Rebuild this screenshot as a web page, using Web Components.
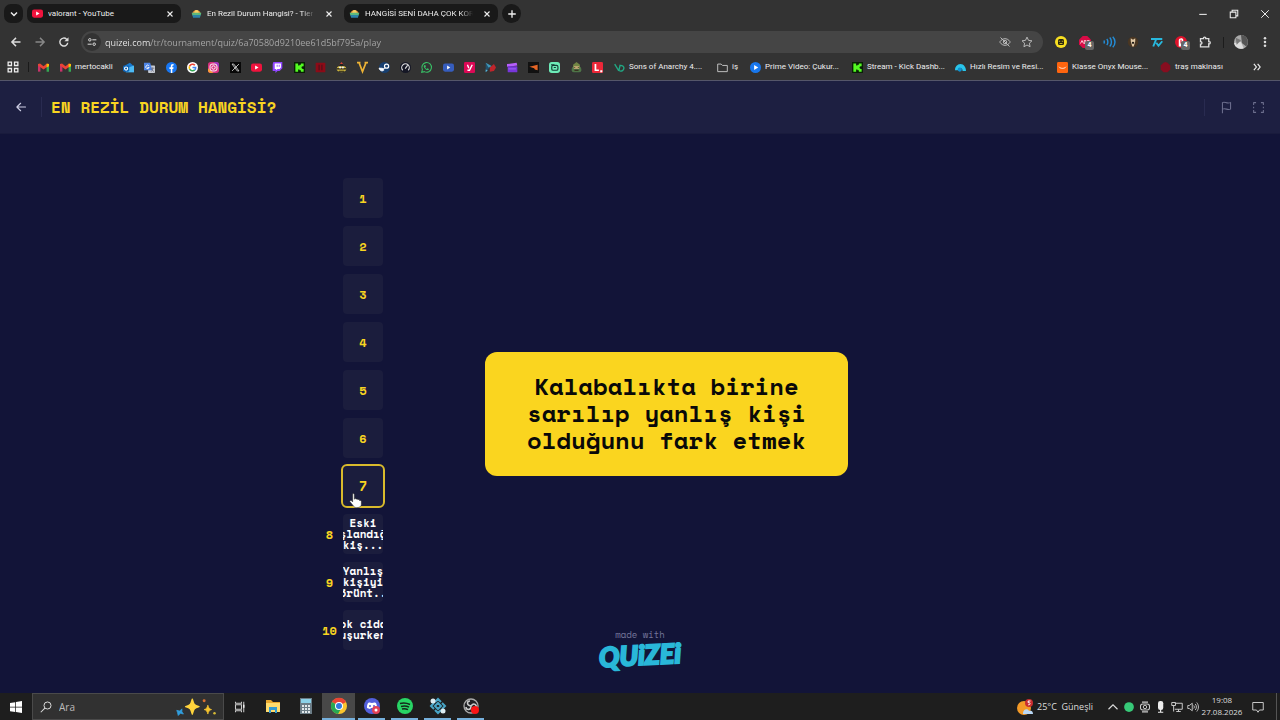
<!DOCTYPE html>
<html lang="tr">
<head>
<meta charset="utf-8">
<meta name="viewport" content="width=device-width, initial-scale=1">
<title>En Rezil Durum Hangisi? - Tier List</title>
<style>
  html, body { margin: 0; height: 100%; }
  body { background: #121438; font-family: "Segoe UI", "Open Sans", "Noto Sans", sans-serif; }
</style>
</head>
<body>
<desktop-screen></desktop-screen>
<script>
const ICONS = {
  down: '<path d="M4 6l4 4 4-4" fill="none" stroke="currentColor" stroke-width="2"/>',
  up: '<path d="M2 11l6-6 6 6" fill="none" stroke="currentColor" stroke-width="1.5"/>',
  close: '<path d="M4 4l8 8M12 4l-8 8" stroke="currentColor" stroke-width="1.8"/>',
  winclose: '<path d="M3 3l10 10M13 3L3 13" stroke="currentColor" stroke-width="1.3"/>',
  minimize: '<path d="M3 8.5h10" stroke="currentColor" stroke-width="1.4"/>',
  restore: '<path d="M3 5.5h7.5V13H3zM5.5 5.500V3H13v7.500h-2.500" fill="none" stroke="currentColor" stroke-width="1.4"/>',
  plus: '<path d="M8 3v10M3 8h10" stroke="currentColor" stroke-width="1.8"/>',
  back: '<path d="M14 8H3M8 2.500L2.500 8 8 13.500" fill="none" stroke="currentColor" stroke-width="1.9"/>',
  thinback: '<path d="M14 8H2.500M7.500 3l-5 5 5 5" fill="none" stroke="currentColor" stroke-width="1.5" stroke-linecap="round" stroke-linejoin="round"/>',
  forward: '<path d="M2 8h11M8 2.500L13.500 8 8 13.500" fill="none" stroke="currentColor" stroke-width="1.9"/>',
  reload: '<path d="M13 9a5.300 5.300 0 1 1-1.600-4.800L13 5.800" fill="none" stroke="currentColor" stroke-width="1.9"/><path d="M14 1.500V7H8.500z" fill="currentColor"/>',
  tune: '<g fill="none" stroke="currentColor" stroke-width="1.6"><circle cx="4.500" cy="4.500" r="2"/><path d="M8.500 4.500H15M1 11.500h6.500"/><circle cx="11.500" cy="11.500" r="2"/></g>',
  eyeoff: '<g fill="none" stroke="currentColor" stroke-width="1.3"><path d="M1 8s2.500-4.500 7-4.500S15 8 15 8s-2.500 4.500-7 4.500S1 8 1 8z"/><circle cx="8" cy="8" r="2.300"/><path d="M2 2l12 12"/></g>',
  star: '<path d="M8 1.500l2 4.300 4.600.6-3.400 3.200.9 4.700L8 12l-4.100 2.300.9-4.700L1.400 6.400 6 5.800z" fill="none" stroke="currentColor" stroke-width="1.300"/>',
  dots: '<g fill="currentColor"><circle cx="8" cy="3" r="1.700"/><circle cx="8" cy="8" r="1.700"/><circle cx="8" cy="13" r="1.700"/></g>',
  puzzle: '<path d="M2 3.500h4c-.5-2.600 3.500-2.600 3 0h4v4c2.600-.5 2.600 3.500 0 3v4H2v-3.500c2.500.3 2.500-3.800 0-3.500z" fill="none" stroke="currentColor" stroke-width="1.800"/>',
  avatar: '<circle cx="8" cy="8" r="8" fill="#aaa"/><path d="M8 0a8 8 0 0 1 6 13l-5-4z" fill="#555"/><path d="M0 9l8-1 3 7a8 8 0 0 1-11-6z" fill="#ddd"/><path d="M2 3l6 3-5 5z" fill="#777"/>',
  quizicon: '<path d="M2 8C3 1 13 1 14 8z" fill="#e8963a"/><circle cx="8" cy="6" r="3" fill="#f6cf65"/><path d="M1 7h14l-1 4H2z" fill="#5db97c"/><path d="M2 10h12l-1 4H3z" fill="#2b82a8"/>',
  youtube: '<rect x="0" y="2" width="16" height="12" rx="3" fill="#f0133d"/><path d="M6 5l5 3-5 3z" fill="#fff"/>',
  apps: '<g fill="none" stroke="currentColor" stroke-width="1.700"><path d="M1.500 1.500h4.500v4.500H1.500zM10 1.500h4.500v4.500H10zM1.500 10h4.500v4.500H1.500zM10 10h4.500v4.500H10z"/></g>',
  gmail: '<path d="M0 3h3.500v11H0z" fill="#c8336a"/><path d="M12.500 5L16 3v11h-3.500z" fill="#34a853"/><path d="M0 3l3-1 5 4 5-4 3 1v2l-8 6-8-6z" fill="#ea4335"/><path d="M12.500 2.500L16 3v3l-3.500 2z" fill="#fbbc04"/>',
  outlook: '<path d="M3 5l7-4 6 5v9H4z" fill="#1779cf"/><path d="M5 9l11-4v10H4z" fill="#4dbaf3"/><rect x="0" y="5" width="9" height="9" rx="2" fill="#0d64b7"/><circle cx="4.500" cy="9.500" r="2.300" fill="none" stroke="#fff" stroke-width="1.500"/>',
  translate: '<rect x="6" y="5" width="10" height="11" rx="1" fill="#c7ccd3"/><path d="M0 1h9l3 11H0z" fill="#4d84e5"/><path d="M7 5.500A2.500 2.500 0 1 0 7.500 8H5" fill="none" stroke="#fff" stroke-width="1.300"/><path d="M10 9h5M12.500 8v2c0 2-1 3-2 4M11 10c1 2 2 3 3.500 4" fill="none" stroke="#667" stroke-width="1"/>',
  facebook: '<circle cx="8" cy="8" r="8" fill="#1877f2"/><path d="M7 16v-6H5V7.500h2V6c0-2 1-3.200 4-3v2.200c-1.300 0-1.800.1-1.800 1.200v1.100H11l-.4 2.500H9.200v6z" fill="#fff"/>',
  google: '<circle cx="8" cy="8" r="8" fill="#fff"/><g fill="none" stroke-width="2.300"><path d="M11.500 4.800A4.700 4.700 0 0 0 3.800 6" stroke="#ea4335"/><path d="M3.800 6a4.700 4.700 0 0 0 .1 4.300" stroke="#fbbc05"/><path d="M3.900 10.300a4.700 4.700 0 0 0 7.300 1.200" stroke="#34a853"/><path d="M11.200 11.500C12.300 10.500 12.700 9.500 12.600 8H8" stroke="#4285f4"/></g>',
  instagram: '<rect width="16" height="16" rx="4" fill="#d9307f"/><path d="M0 9l8 7H4a4 4 0 0 1-4-4z" fill="#fb9d37"/><path d="M8 0h4a4 4 0 0 1 4 4v4z" fill="#9c36bd"/><rect x="3" y="3" width="10" height="10" rx="3" fill="none" stroke="#fff" stroke-width="1.400"/><circle cx="8" cy="8" r="2.500" fill="none" stroke="#fff" stroke-width="1.400"/>',
  x: '<rect width="16" height="16" fill="#080808"/><path d="M3 3h2.500L13 13h-2.500zM13 3L3 13" fill="none" stroke="#ddd" stroke-width="1.200"/>',
  twitch: '<path d="M2 0h13v9l-4 4H8l-3 3v-3H1V3z" fill="#9146ff"/><path d="M4 2h9v6l-2 2H8l-2 2v-2H4z" fill="#fff"/><path d="M7.500 4v3M10.500 4v3" stroke="#9146ff" stroke-width="1.300"/>',
  kick: '<rect width="16" height="16" fill="#092106"/><path d="M2 2h4v3h2V4h2V2h4v4h-2v1h-1v2h1v1h2v4h-4v-2H8v-1H6v3H2z" fill="#54fb22"/>',
  redbook: '<rect x="1" y="1" width="14" height="14" rx="1" fill="#8c0b17"/><path d="M6 4v8M10 4v8" stroke="#57101a" stroke-width="2"/>',
  bee: '<ellipse cx="8" cy="10" rx="7" ry="5" fill="#d6bd42"/><path d="M5 4l3-4 3 4z" fill="#d74036"/><path d="M4 6l2-3h4l2 3z" fill="#222"/><path d="M1 10h14M4 13.500h8" stroke="#161616" stroke-width="1.600"/><circle cx="6" cy="8" r="1.600" fill="#eee"/><circle cx="10" cy="8" r="1.600" fill="#eee"/>',
  v: '<path d="M0 1h5M11 1h5M3 1l5 13 5-13" fill="none" stroke="#edb335" stroke-width="2.500"/>',
  steam: '<circle cx="8" cy="8" r="8" fill="#173f70"/><circle cx="11" cy="6" r="3" fill="none" stroke="#fff" stroke-width="1.800"/><path d="M0 9l6 2 3-2M0 9c1 4 5 5 7 3L5 9z" fill="#eef6ff" stroke="#fff"/>',
  gauge: '<circle cx="8" cy="8" r="8" fill="#151725"/><path d="M4 12a5.500 5.500 0 1 1 8 0M7.500 9.500L11 5" fill="none" stroke="#ddd" stroke-width="1.700"/>',
  whatsapp: '<path d="M1 15l1-4A7 7 0 1 1 5 14z" fill="none" stroke="#38bd65" stroke-width="1.600"/><path d="M5 4.500l2 .5v2L6 8l2 2.300L9.500 9l2 1c0 3-5 2-7-2-.8-1.600-.5-2.700.5-3.500z" fill="#38bd65"/>',
  bluevideo: '<rect y="2" width="16" height="12" rx="3" fill="#365dbd"/><path d="M6 5l4.500 3L6 11z" fill="#fff"/>',
  y: '<rect width="16" height="16" rx="2" fill="#dc0956"/><path d="M5 4l2 5M12 4L8 12H5" fill="none" stroke="#fff" stroke-width="2"/>',
  prism: '<path d="M1 1l9 5-4 3-5 6z" fill="#24506a"/><path d="M1 1l9 5-5 2z" fill="#4298b9"/><path d="M7 8l6-5 3 5-3 5-6 1z" fill="#bf252b"/><path d="M1 11l3 1-3 3z" fill="#56b5d8"/>',
  clap: '<path d="M0 3l14-2 1 4L0 7z" fill="#b75efb"/><rect x="1" y="6" width="14" height="9" rx="1" fill="#7836db"/><path d="M2 10h11" stroke="#b579ff"/>',
  arrow: '<rect width="16" height="16" fill="#111"/><path d="M2 7l12-3v8l-4-1-1-2z" fill="#e56526"/>',
  robot: '<rect width="16" height="16" rx="4" fill="#6decb8"/><rect x="4" y="5" width="9" height="7" rx="2" fill="none" stroke="#153e37" stroke-width="1.700"/><path d="M3 4h5M7 8h3" stroke="#153e37" stroke-width="1.500"/>',
  frog: '<path d="M3 4l5-4 5 4v10H3z" fill="#718544"/><rect x="1" y="7" width="14" height="8" rx="3" fill="#4e7447"/><path d="M4 6h8v4H4z" fill="#c1aa74"/><path d="M5 8h1M10 8h1M5 12h6" stroke="#301e14" stroke-width="1.500"/>',
  l: '<rect width="16" height="16" rx="2" fill="#ec2738"/><path d="M5 3v9h5" fill="none" stroke="#fff" stroke-width="2.500"/><path d="M12 12h3v3h-3z" fill="#fff"/>',
  vb: '<path d="M1 3l6 10M9 4l-2 9M8 5c10-1 7 10 0 8" fill="none" stroke="#21a783" stroke-width="2"/>',
  folder: '<path d="M1 3h5l2 2h7v9H1z" fill="none" stroke="#ccc" stroke-width="1.300"/>',
  prime: '<circle cx="8" cy="8" r="8" fill="#1877ed"/><path d="M6 4.500L12 8l-6 3.500z" fill="#fff"/>',
  cloud: '<path d="M0 12a8 8 0 0 1 8-9c5 0 8 5 8 10h-5c0-5-4-5-5-1z" fill="#29c4ea"/><circle cx="7" cy="11" r="3" fill="#0d91d2"/>',
  orange: '<rect width="16" height="16" rx="2" fill="#ff650f"/><path d="M3 7c2 3 8 3 10 0" fill="none" stroke="#fff" stroke-width="1.300"/>',
  redspot: '<path d="M8 0l3 1 4 4v6l-4 4-6 0-4-4V5l4-4z" fill="#870e20"/>',
  more: '<path d="M3 3l4 5-4 5M9 3l4 5-4 5" fill="none" stroke="currentColor" stroke-width="1.900"/>',
  smiley: '<circle cx="8" cy="8" r="8" fill="#f7df21"/><rect x="4" y="4" width="8" height="8" rx="2" fill="#292513"/><path d="M5 7h2M9 7h2M6 10h4" stroke="#f7df21"/>',
  abp: '<path d="M5 0h6l5 5v6l-5 5H5l-5-5V5z" fill="#d90b46"/><path d="M2 10l2-4 2 4M7 6v4h2V6zM11 10V6h3" fill="none" stroke="#ffd6df" stroke-width="1.200"/>',
  waves: '<g fill="none" stroke="#238ed9" stroke-width="1.900"><path d="M1 6c1 1 1 3 0 4M5 4c2 2 2 6 0 8M9 2c3 3 3 9 0 12M13 1c4 4 4 10 0 14"/></g>',
  cat: '<circle cx="8" cy="8" r="7" fill="#493622"/><path d="M5 3l3 2 3-2v4l-2 7H7L5 7z" fill="#dfc7a5"/><circle cx="8" cy="9" r="1.500" fill="#1a1713"/>',
  seven: '<path d="M0 4h7L3 14M7 9l3 4 5-6M8 4h7" fill="none" stroke="#28b8dd" stroke-width="2.600"/>',
  ublock: '<circle cx="8" cy="8" r="8" fill="#df132b"/><path d="M5 14V6c0-4 6-4 6-1v3H8v6z" fill="#fff"/><path d="M8 5v5" stroke="#df132b" stroke-width="1.500"/>',
  flag: '<path d="M3 15V2c3-2 5 2 10 0v8c-4 2-6-2-10 0" fill="none" stroke="currentColor" stroke-width="1.300"/>',
  full: '<path d="M5 2H2v3M11 2h3v3M2 11v3h3M14 11v3h-3M2 7v2M14 7v2" fill="none" stroke="currentColor" stroke-width="1.300" stroke-linejoin="round"/>',
  windows: '<path d="M0 2.500l7-1v6H0zM8 1.300L16 0v7.500H8zM0 8.500h7v6l-7-1zM8 8.500h8V16l-8-1.300z" fill="#fff"/>',
  search: '<circle cx="10" cy="6" r="4.700" fill="none" stroke="currentColor" stroke-width="1.300"/><path d="M6.500 9.500L1 15" stroke="currentColor" stroke-width="1.400"/>',
  taskview: '<path d="M2 1v2h8V1M2 15v-2h8v2M2 5h8v6H2zM13 1v14" fill="none" stroke="#ccc" stroke-width="1.400"/><path d="M12 5h2v4h-2z" fill="#eee"/>',
  explorer: '<path d="M1 2h5l2 2h7v10H1z" fill="#e7a72f"/><path d="M1 5h14v9H1z" fill="#ffdc6d"/><path d="M4 15V9h8v6h-2v-3H6v3z" fill="#349bd0"/>',
  calc: '<rect x="2" width="12" height="16" fill="#6b7c86"/><path d="M3 1h10v4H3z" fill="#8bd1e8"/><path d="M4 8h8M4 11h8M4 14h8" stroke="#e2e8eb" stroke-width="2" stroke-dasharray="2 1"/>',
  chrome: '<circle cx="8" cy="8" r="8" fill="#fbc52d"/><path d="M8 8L1 4a8 8 0 0 1 14 0z" fill="#e94435"/><path d="M8 8L1 4a8 8 0 0 0 6 12l4-7z" fill="#28a852"/><circle cx="8" cy="8" r="4" fill="#fff"/><circle cx="8" cy="8" r="3" fill="#327bdc"/>',
  discord: '<circle cx="8" cy="8" r="8" fill="#5360dc"/><path d="M3 10c0-6 2-6 5-5 3-1 5-1 5 5l-3 1-1-1H7l-1 1z" fill="#fff"/><circle cx="6" cy="8" r="1" fill="#5360dc"/><circle cx="10" cy="8" r="1" fill="#5360dc"/><circle cx="12" cy="12" r="4" fill="#e34256"/><circle cx="12" cy="12" r="1.500" fill="#fff"/>',
  spotify: '<circle cx="8" cy="8" r="8" fill="#28d565"/><path d="M3 5.500c4-1 7-.5 10 1M4 8.500c3-1 6-.5 8 .7M5 11c2-.5 4-.3 6 .7" fill="none" stroke="#15271b" stroke-width="1.500"/>',
  network: '<g fill="none" stroke="#48a5c7" stroke-width="2"><path d="M8 5l3 3-3 3-3-3zM5 4l3-3 3 3M5 12l3 3 3-3M4 5L1 8l3 3M12 5l3 3-3 3"/></g><circle cx="3" cy="3" r="2.500" fill="#ddebf1"/><circle cx="13" cy="13" r="2.500" fill="#ddebf1"/>',
  obs: '<circle cx="8" cy="8" r="7" fill="#202124" stroke="#aaa" stroke-width="1.300"/><path d="M8 8c-5-1-4-5-1-5M8 8c3-4 6-1 5 2M8 8c0 5-5 4-5 1" fill="none" stroke="#ccc" stroke-width="1.500"/><circle cx="12" cy="12" r="4" fill="#fa1414"/>',
  sparkle: '<path d="M22 0c2 7 2 8 9 10-7 2-7 3-9 10-2-7-2-8-9-10 7-2 7-3 9-10z" fill="#ffd43c" stroke="#ffd43c" stroke-width="2" stroke-linejoin="round"/><path d="M43 8c1 4 2 5 5 6-3 1-4 2-5 6-1-4-2-5-5-6 3-1 4-2 5-6z" fill="#f7c52e" stroke="#f7c52e"/><path d="M1 15l4 1 3-3v4l2 3-4-1-3 3-1-4z" fill="#319edd" stroke="#319edd"/><circle cx="38" cy="2" r="2" fill="#dc7130"/><circle cx="52" cy="19" r="1.700" fill="#d7ba35"/>',
  weather: '<circle cx="7" cy="9" r="7" fill="#f39a27"/><path d="M6 14c0-4 5-5 6-2 3-1 4 1 4 3H6z" fill="#b9d7f4"/><circle cx="12" cy="4" r="4" fill="#c92d30"/><path d="M13.500 2h-2.300v1.700c2.600-.4 2.600 2.300 0 2.100" fill="none" stroke="#fff" stroke-width="1"/>',
  green: '<circle cx="8" cy="8" r="6.500" fill="#37c978"/>',
  camera: '<rect x="2" y="4" width="12" height="8" rx="3" fill="none" stroke="#ccc" stroke-width="1.400"/><path d="M4 1.500h8M4 14.500h8" stroke="#ccc" stroke-width="1.400"/><circle cx="8" cy="8" r="2.300" fill="none" stroke="#ccc" stroke-width="1.300"/>',
  mic: '<rect x="4" y="0" width="7" height="12" rx="3" fill="#eee"/><path d="M7.500 11v4M4 15h7" stroke="#eee" stroke-width="1.500"/>',
  monitor: '<path d="M5 3h10v8H5M10 11v3M7 14h6M1 2h5v4H1zM3.500 6v8" fill="none" stroke="#ccc" stroke-width="1.300"/>',
  sound: '<path d="M1 6h2l4-3v10l-4-3H1zM9 6c1 1 1 3 0 4M11 4c2 2 2 6 0 8M13 2c3 4 3 8 0 12" fill="none" stroke="#ccc" stroke-width="1.200"/>',
  note: '<path d="M1 2h14v10h-5l-2 3-2-3H1z" fill="none" stroke="#ccc" stroke-width="1.300"/>',
  hand: '<path d="M3 1c1-1 2 0 2 1v5c1-1 2-.5 2 0 1-.6 2 0 2 .6 1-.5 2 0 2 1 1-.3 2 .2 2 1V13c0 4-7 5-9 2L0 10c-1-1 1-2 2-1l1 1z" fill="#fff" stroke="#222" stroke-width=".7"/>'
};
const icon = (n, cls = '') => `<ui-icon name="${n}" class="${cls}"></ui-icon>`;
const BASE = `*{box-sizing:border-box}button,input{font:inherit;color:inherit;border:0;background:none;padding:0;margin:0;outline:0}a{color:inherit;text-decoration:none}button{display:grid;place-items:center;place-content:center}`;
const MONO = `"Space Mono","DejaVu Sans Mono",monospace`;

function define(name, css, markup) {
  const t = document.createElement('template');
  customElements.define(name, class extends HTMLElement {
    connectedCallback() {
      if (this.shadowRoot) return;
      const root = this.attachShadow({ mode: 'open' });
      t.innerHTML = `<style>${BASE}${css}</style>` + (typeof markup === 'function' ? markup(this) : markup);
      root.append(t.content.cloneNode(true));
    }
  });
}

define('ui-icon', `:host{display:block;width:12px;height:12px;flex:none}svg{display:block;width:100%;height:100%;overflow:visible}`,
  el => `<svg viewBox="${el.getAttribute('name') === 'sparkle' ? '0 0 54 21' : '0 0 16 16'}" aria-hidden="true">${ICONS[el.getAttribute('name')]}</svg>`);

define('browser-tab', `
  :host{display:flex;align-items:center;width:154px;height:19px;padding:0 6px 0 5px;border-radius:7px;background:#191919;font-size:8px}
  :host([active]){background:none}
  .label{flex:1;min-width:0;height:19px;margin:0 9px 0 5px;display:block;text-align:left;line-height:19px;overflow:hidden;white-space:nowrap}
  :host([fade]) .label{-webkit-mask:linear-gradient(90deg,#000 88%,transparent)}
  ui-icon{width:11px;height:11px}.x ui-icon{width:10px;height:10px}`,
  el => `${icon(el.getAttribute('icon'))}<button class="label"><slot></slot></button><button class="x" aria-label="Kapat">${icon('close')}</button>`);

define('tab-strip', `
  :host{display:flex;align-items:center;height:27px;padding:0 8px 0 4px;color:#eee;font-family:Roboto,sans-serif}
  .menu,.new{width:19px;height:19px;border-radius:7px;background:#191919;margin-right:4px}
  .new{border-radius:50%;margin-left:4px}
  .menu ui-icon,.new ui-icon{width:12px;height:12px}
  browser-tab[active]{margin:0 4px 0 5px}
  .win{display:flex;gap:19px;margin-left:auto;margin-right:1px}`,
  `<button class="menu" aria-label="Sekme ara">${icon('down')}</button>
   <browser-tab icon="youtube">valorant - YouTube</browser-tab>
   <browser-tab icon="quizicon" active fade>En Rezil Durum Hangisi? - Tier List</browser-tab>
   <browser-tab icon="quizicon" fade>HANGİSİ SENİ DAHA ÇOK KORKUTUR</browser-tab>
   <button class="new" aria-label="Yeni sekme">${icon('plus')}</button>
   <div class="win"><button aria-label="Küçült">${icon('minimize')}</button><button aria-label="Geri yükle">${icon('restore')}</button><button aria-label="Kapat">${icon('winclose')}</button></div>`);

define('address-bar', `
  :host{display:flex;align-items:center;height:30px;padding:0 9px 0 10px;color:#ddd}
  .nav{display:flex;gap:12px}.nav .off{color:#888}
  .box{flex:1;display:flex;align-items:center;height:22px;margin:0 12px 0 11px;padding:0 10px 0 2px;border-radius:11px;background:#454545}
  .site{width:18px;height:18px;border-radius:50%;background:#333;margin-right:4px}
  .site ui-icon{width:10px;height:10px}
  input{flex:1;height:18px;font-size:9px;color:transparent;background:linear-gradient(90deg,#eee 46px,#aaa 46px);background-clip:text;-webkit-background-clip:text}
  .end{display:flex;gap:10px;color:#bbb}
  .ext{display:flex;gap:12px;align-items:center}
  .ext button{position:relative}
  .badge{position:absolute;left:6px;top:5px;width:9px;height:9px;border-radius:2px;background:#666;color:#fff;font:bold 7px/9px Roboto,sans-serif;text-align:center}
  .sep{width:1px;height:11px;background:#1c1c1c;margin:0 10px 0 12px}
  .av ui-icon{width:14px;height:14px}.av{margin-right:11px}`,
  `<div class="nav"><button aria-label="Geri">${icon('back')}</button><button class="off" aria-label="İleri">${icon('forward')}</button><button aria-label="Yenile">${icon('reload')}</button></div>
   <div class="box"><button class="site" aria-label="Site bilgisi">${icon('tune')}</button>
   <input aria-label="Adres" value="quizei.com/tr/tournament/quiz/6a70580d9210ee61d5bf795a/play">
   <div class="end"><button aria-label="Gizle">${icon('eyeoff')}</button><button aria-label="Yer işareti">${icon('star')}</button></div></div>
   <div class="ext">${['smiley', 'abp', 'waves', 'cat', 'seven', 'ublock', 'puzzle'].map(n => `<button aria-label="${n}">${icon(n)}${n === 'abp' || n === 'ublock' ? '<span class="badge">4</span>' : ''}</button>`).join('')}</div>
   <span class="sep"></span><button class="av" aria-label="Profil">${icon('avatar')}</button><button aria-label="Menü">${icon('dots')}</button>`);

define('bookmark-link', `:host{display:block}a{display:flex;align-items:center;gap:4px;height:16px;font-size:8px;line-height:16px;white-space:nowrap}ui-icon{width:11px;height:11px}`,
  el => `<a href="#" aria-label="${el.getAttribute('icon')}">${icon(el.getAttribute('icon'))}<slot></slot></a>`);

define('bookmark-bar', `
  :host{display:flex;align-items:center;height:24px;padding:0 18px 3px 7px;color:#eee;border-bottom:1px solid #55566a;box-sizing:border-box;font-family:Roboto,sans-serif}
  .sep{width:1px;height:10px;background:#1a1a1a;margin:0 9px}
  .mert{width:54px;margin:0 9px 0 11px}
  .strip{display:flex;justify-content:space-between;width:480px;margin-right:11px}
  .named{flex:1;display:grid;grid-template-columns:103px 33px 102px 103px 102px 103px 1fr}
  .more{margin-left:auto}.more ui-icon{width:10px;height:10px}`,
  `<button aria-label="Uygulamalar">${icon('apps')}</button><span class="sep"></span>
   <bookmark-link icon="gmail"></bookmark-link><bookmark-link class="mert" icon="gmail">mertocakli</bookmark-link>
   <div class="strip">${'outlook translate facebook google instagram x youtube twitch kick redbook bee v steam gauge whatsapp bluevideo y prism clap arrow robot frog l'.split(' ').map(n => `<bookmark-link icon="${n}"></bookmark-link>`).join('')}</div>
   <div class="named"><bookmark-link icon="vb">Sons of Anarchy 4....</bookmark-link><bookmark-link icon="folder">iş</bookmark-link><bookmark-link icon="prime">Prime Video: Çukur...</bookmark-link><bookmark-link icon="kick">Stream - Kick Dashb...</bookmark-link><bookmark-link icon="cloud">Hızlı Resim ve Resi...</bookmark-link><bookmark-link icon="orange">Klasse Onyx Mouse...</bookmark-link><bookmark-link icon="redspot">traş makinası</bookmark-link></div>
   <button class="more" aria-label="Diğer yer işaretleri">${icon('more')}</button>`);

define('quiz-header', `
  :host{display:flex;align-items:center;height:53px;box-sizing:border-box;padding:0 15px;background:#1d1f41;border-bottom:1px solid #191b3c;color:#cfd0e6}
  h1{margin:0 0 0 14px;padding-left:9px;border-left:1px solid #292b50;font:bold 16px/20px ${MONO};color:#f8d421}
  .tools{display:flex;gap:19px;margin-left:auto;color:#6c6e8d;border-left:1px solid #292b50;padding:2px 0 2px 15px}
  .tools ui-icon{width:13px;height:13px}`,
  `<button aria-label="Geri">${icon('thinback')}</button><h1>EN REZİL DURUM HANGİSİ?</h1>
   <div class="tools"><button aria-label="Bildir">${icon('flag')}</button><button aria-label="Tam ekran">${icon('full')}</button></div>`);

define('rank-slot', `
  :host{display:grid;grid-template-columns:19px 40px;gap:4px;align-items:center;font-family:${MONO};font-weight:bold;font-size:12px;color:#f8d421}
  .rank{justify-self:center;white-space:nowrap}
  .tile{grid-column:2;width:40px;height:40px;border-radius:4px;background:#1b1d3d;overflow:hidden}
  :host([active]) .tile{outline:2px solid #d9ba2c;font-size:13px}
  .text{color:#fff;display:flex;flex-direction:column;align-items:center;justify-content:center;font-size:11px;line-height:11px;white-space:nowrap}`,
  el => {
    const n = el.getAttribute('rank'), t = el.getAttribute('lines');
    return t ? `<span class="rank">${n}</span><div class="tile text">${t.split('|').map(s => `<span>${s}</span>`).join('')}</div>` : `<button class="tile">${n}</button>`;
  });

define('choice-card', `
  :host{display:block;width:363px;box-sizing:border-box;padding:21px 40px 22px;border-radius:12px;background:#fad51f;color:#090909;text-align:center}
  p{margin:0;font:bold 24px/27px ${MONO}}`, `<p><slot></slot></p>`);

define('made-with', `
  :host{display:block;text-align:center;font:9px/12px ${MONO};color:#74769a}
  a{display:block;font:italic 900 27px/28px Lato,sans-serif;color:#29b7d8;-webkit-text-stroke:2px #29b7d8;rotate:-3deg}`,
  `made with<a href="#">QUiZEi</a>`);

define('quiz-stage', `
  :host{flex:1;display:grid;background:#121438}
  .play,made-with{grid-area:1/1}
  .play{display:flex;align-items:center;gap:102px;padding:44px 0 43px 25%}
  .list{position:relative;display:grid;gap:8px;width:63px}
  .hand{position:absolute;left:30px;top:315px;width:14px;height:14px}
  made-with{align-self:end;justify-self:center;padding-bottom:24px}`,
  `<div class="play"><div class="list">${[1, 2, 3, 4, 5, 6].map(n => `<rank-slot rank="${n}"></rank-slot>`).join('')}<rank-slot rank="7" active></rank-slot>
   <rank-slot rank="8" lines="Eski|hoşlandığın|kiş..."></rank-slot><rank-slot rank="9" lines="Yanlış|kişiyi|görünt..."></rank-slot><rank-slot rank="10" lines="Çok ciddi|konuşurken..."></rank-slot>${icon('hand', 'hand')}</div>
   <choice-card>Kalabalıkta birine sarılıp yanlış kişi olduğunu fark etmek</choice-card></div><made-with></made-with>`);

define('task-bar', `
  :host{display:flex;align-items:center;height:27px;background:#1e1e1e;color:#ddd;font-size:9px}
  .start{width:32px;height:27px}
  .search{display:flex;align-items:center;width:192px;height:27px;padding:0 7px 0 7px;border:1px solid #4a4a4a;background:#313131}
  .search input{flex:1;min-width:0;margin-left:7px;font-size:10px}
  .search input::placeholder{color:#bbb;opacity:1}
  .sparkle{width:40px;height:16px}
  .view{width:32px}
  .apps{display:flex}
  .apps button{width:33px;height:27px;padding-bottom:1px}
  .apps .on{background:linear-gradient(#76b0dc,#76b0dc) center bottom/27px 2px no-repeat}
  .apps .current{background-color:#484848;background-size:33px 2px}
  .apps ui-icon{width:16px;height:16px}
  .tray{display:flex;align-items:center;margin-left:auto;height:27px}
  .weather{display:flex;align-items:center;gap:4px;margin-right:14px;white-space:nowrap}
  .weather ui-icon{width:16px;height:16px}
  .status{display:flex;gap:4px}
  .clock{width:46px;text-align:center;font-size:8px;line-height:12px;padding-bottom:2px}
  .notes{margin:0 12px 0 7px}
  .edge{width:1px;height:27px;background:#555;margin-right:3px}`,
  `<button class="start" aria-label="Başlat">${icon('windows')}</button>
   <label class="search">${icon('search')}<input type="search" aria-label="Ara" placeholder="Ara">${icon('sparkle', 'sparkle')}</label>
   <button class="view" aria-label="Görev görünümü">${icon('taskview')}</button>
   <div class="apps">${[['explorer', ''], ['calc', ''], ['chrome', 'on current'], ['discord', 'on'], ['spotify', 'on'], ['network', 'on'], ['obs', 'on']].map(([n, c]) => `<button class="${c}" aria-label="${n}">${icon(n)}</button>`).join('')}</div>
   <div class="tray"><button class="weather">${icon('weather')}<span>25°C&nbsp; Güneşli</span></button>
   <div class="status">${['up', 'green', 'camera', 'mic', 'monitor', 'sound'].map(n => `<button aria-label="${n}">${icon(n)}</button>`).join('')}</div>
   <time class="clock" datetime="2026-08-27T19:08">19:08<br>27.08.2026</time><button class="notes" aria-label="Bildirimler">${icon('note')}</button><span class="edge"></span></div>`);

define('desktop-screen', `
  :host{display:flex;flex-direction:column;min-height:100vh;overflow:hidden}
  .chrome{background:#333}`,
  `<div class="chrome"><tab-strip></tab-strip><address-bar></address-bar><bookmark-bar></bookmark-bar></div><quiz-header></quiz-header><quiz-stage></quiz-stage><task-bar></task-bar>`);
</script>
</body>
</html>
